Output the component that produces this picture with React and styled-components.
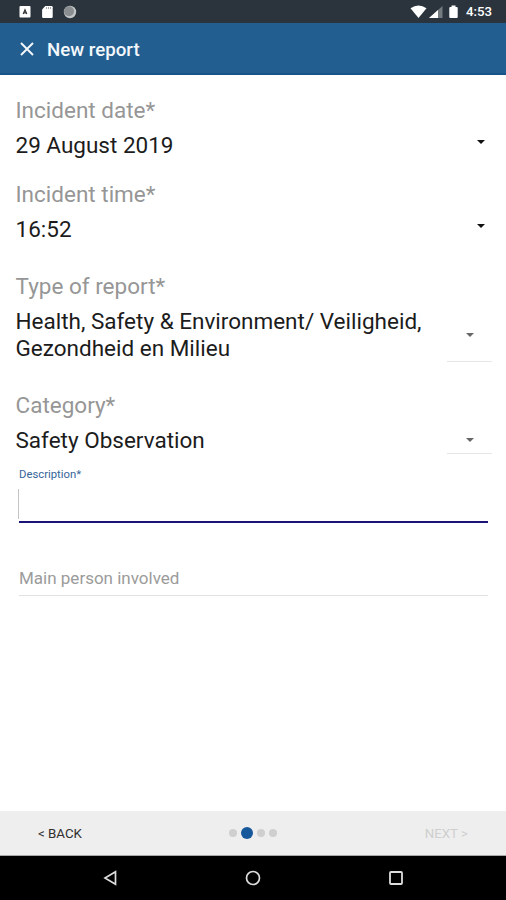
import React from "react";
import styled, { createGlobalStyle } from "styled-components";

const GlobalStyle = createGlobalStyle`
  body {
    margin: 0;
    font-family: Roboto, "Liberation Sans", sans-serif;
    background: #fff;
  }
`;

const Screen = styled.div`
  display: flex;
  flex-direction: column;
  height: 900px;
`;

const StatusBar = styled.div`
  display: flex;
  justify-content: space-between;
  height: 23px;
  box-sizing: border-box;
  padding: 0 14px 0 19px;
  background: #2b343d;
  color: #fff;
`;

const StatusGroup = styled.div`
  display: flex;
  align-items: center;
`;

const Clock = styled.span`
  width: 26px;
  margin-left: 6px;
  padding-top: 1px;
  font-size: 13.2px;
  font-weight: 500;
  line-height: 20px;
  white-space: nowrap;
`;

const Header = styled.header`
  display: flex;
  align-items: center;
  height: 52px;
  box-sizing: border-box;
  padding: 1px 20px 0;
  border-bottom: 2px solid #175489;
  background: #235e91;
`;

const Title = styled.h1`
  margin: 2px 0 0 13px;
  color: #f4f8fb;
  font-size: 18.7px;
  font-weight: 500;
  line-height: 24px;
`;

const Form = styled.main`
  flex: 1;
  padding-top: 22px;
`;

const Field = styled.div`
  margin-bottom: ${props => props.$gap || 0}px;
  padding: 0 14px 0 15.5px;
`;

const Label = styled.div`
  height: 28px;
  margin-bottom: 7px;
  color: #969696;
  font-size: 22.5px;
  line-height: 27px;
`;

const Row = styled.div`
  display: flex;
  justify-content: space-between;
`;

const Value = styled.div`
  color: #1c1c1c;
  font-size: 22.5px;
  line-height: 27px;
  white-space: pre-line;
`;

const DateArrow = styled.div`
  width: 23px;
  padding-top: 7px;
  line-height: 0;
  text-align: center;
`;

const SelectArrow = styled.div`
  display: flex;
  align-items: center;
  justify-content: center;
  width: 45px;
  box-sizing: border-box;
  border-bottom: 1px solid #e6e6e6;
`;

const InputField = styled.label`
  display: block;
  margin: ${props => props.$top}px 18px 0 19px;
`;

const InputLabel = styled.div`
  height: 17px;
  color: #356499;
  font-size: 11.3px;
  line-height: 16px;
`;

const Input = styled.input`
  display: block;
  width: 100%;
  height: ${props => (props.$active ? 39 : 35)}px;
  box-sizing: border-box;
  padding: 0;
  border: none;
  border-bottom: ${props => (props.$active ? "2px solid #1b1478" : "1px solid #e2e2e2")};
  outline: none;
  background: transparent;
  font-family: inherit;
  font-size: 17px;

  &::placeholder {
    color: #9b9b9b;
    opacity: 1;
  }
`;

const InputRow = styled.div`
  position: relative;
`;

const Caret = styled.span`
  position: absolute;
  left: -1px;
  top: 5px;
  width: 1px;
  height: 30px;
  background: #c4c4c4;
`;

const Footer = styled.footer`
  display: grid;
  grid-template-columns: 1fr 49px 1fr;
  align-items: center;
  height: 45px;
  box-sizing: border-box;
  padding: 0 38px 0 38px;
  border-bottom: 1px solid #a8a8a8;
  background: #eee;
`;

const FooterButton = styled.button`
  justify-self: ${props => props.$side};
  padding: 1px 0 0;
  border: none;
  background: none;
  color: ${props => (props.disabled ? "#cfcfcf" : "#303030")};
  font-family: inherit;
  font-size: 13.3px;
  font-weight: 400;
  line-height: 18px;
`;

const Dots = styled.div`
  display: flex;
  align-items: center;
  justify-content: space-between;
`;

const Dot = styled.span`
  width: ${props => (props.$active ? 12 : 8)}px;
  height: ${props => (props.$active ? 12 : 8)}px;
  border-radius: 50%;
  background: ${props => (props.$active ? "#17589b" : "#cfcfcf")};
`;

const NavBar = styled.nav`
  display: flex;
  align-items: center;
  justify-content: space-between;
  height: 44px;
  box-sizing: border-box;
  padding: 0 102px;
  background: #000;
`;

function Arrow({ color }) {
  return (
    <svg width="8" height="4" viewBox="0 0 8 4">
      <path d="M0 0h8L4 4z" fill={color} />
    </svg>
  );
}

function NotificationIcons() {
  return (
    <svg width="60" height="16" viewBox="0 0 60 16">
      <rect x="0.5" y="2" width="11" height="11.5" rx="1" fill="#fff" />
      <path d="M4.2 10 6 5.8 7.8 10M4.8 8.8h2.4" fill="none" stroke="#333" strokeWidth="1.2" />
      <path d="M26.3 2h6.2q1.2 0 1.2 1.2v9.6q0 1.2-1.2 1.2h-8.2q-1.2 0-1.2-1.2V5.5z" fill="#fff" />
      <path d="M27.5 3v2M29.5 3v2M31.5 3v2" stroke="#a3a7aa" />
      <circle cx="51" cy="8" r="6.2" fill="#c3c6c8" />
      <circle cx="50" cy="7.2" r="5" fill="#8a8e91" />
    </svg>
  );
}

function SignalIcons() {
  return (
    <svg width="50" height="16" viewBox="0 0 50 16">
      <path d="M0.5 4.2Q8.5-1.2 16.5 4.2L8.5 14z" fill="#fff" />
      <path d="M32.5 2v12H19z" fill="#737a80" />
      <path d="M28 6V14h-9z" fill="#fff" />
      <path d="M41.5 1.5h4V3h1.2q1 0 1 1v9q0 1-1 1h-6.4q-1 0-1-1V4q0-1 1-1h1.2z" fill="#fff" />
    </svg>
  );
}

function DateField({ label, value, gap }) {
  return (
    <Field $gap={gap}>
      <Label>{label}</Label>
      <Row>
        <Value>{value}</Value>
        <DateArrow>
          <Arrow color="#111" />
        </DateArrow>
      </Row>
    </Field>
  );
}

function SelectField({ label, value, gap }) {
  return (
    <Field $gap={gap}>
      <Label>{label}</Label>
      <Row>
        <Value>{value}</Value>
        <SelectArrow>
          <Arrow color="#666" />
        </SelectArrow>
      </Row>
    </Field>
  );
}

function App() {
  return (
    <Screen>
      <GlobalStyle />
      <StatusBar>
        <StatusGroup>
          <NotificationIcons />
        </StatusGroup>
        <StatusGroup>
          <SignalIcons />
          <Clock>4:53</Clock>
        </StatusGroup>
      </StatusBar>
      <Header>
        <svg width="14" height="14" viewBox="0 0 14 14">
          <path d="M1 1l12 12M13 1L1 13" stroke="#f4f8fb" strokeWidth="1.9" />
        </svg>
        <Title>New report</Title>
      </Header>
      <Form>
        <DateField label="Incident date*" value="29 August 2019" gap={22} />
        <DateField label="Incident time*" value="16:52" gap={30} />
        <SelectField
          label="Type of report*"
          value={"Health, Safety & Environment/ Veiligheid,\nGezondheid en Milieu"}
          gap={30}
        />
        <SelectField label="Category*" value="Safety Observation" />
        <InputField $top={13}>
          <InputLabel>Description*</InputLabel>
          <InputRow>
            <Caret />
            <Input $active />
          </InputRow>
        </InputField>
        <InputField $top={38}>
          <Input placeholder="Main person involved" />
        </InputField>
      </Form>
      <Footer>
        <FooterButton $side="start">&lt; BACK</FooterButton>
        <Dots>
          <Dot />
          <Dot $active />
          <Dot />
          <Dot />
        </Dots>
        <FooterButton $side="end" disabled>
          NEXT &gt;
        </FooterButton>
      </Footer>
      <NavBar>
        <svg width="16" height="16" viewBox="0 0 16 16">
          <path d="M13.5 1.8v12.4L3 8z" fill="none" stroke="#ddd" strokeWidth="1.7" />
        </svg>
        <svg width="16" height="16" viewBox="0 0 16 16">
          <circle cx="8" cy="8" r="6.5" fill="none" stroke="#ddd" strokeWidth="1.7" />
        </svg>
        <svg width="16" height="16" viewBox="0 0 16 16">
          <rect x="2" y="2" width="12" height="12" rx="1" fill="none" stroke="#ddd" strokeWidth="1.8" />
        </svg>
      </NavBar>
    </Screen>
  );
}

export default App;
